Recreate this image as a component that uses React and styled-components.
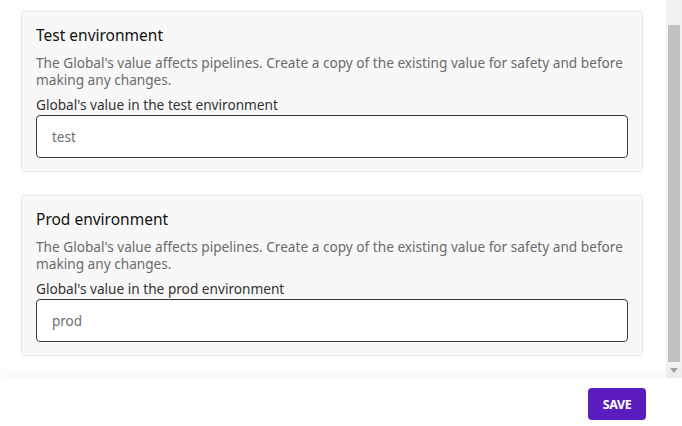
import React, { useEffect, useRef } from "react";
import styled, { createGlobalStyle } from "styled-components";

const GlobalStyle = createGlobalStyle`
  html, body {
    margin: 0;
    padding: 0;
    background: #ffffff;
    font-family: "Noto Sans", "Open Sans", sans-serif;
  }
  * {
    box-sizing: border-box;
  }
`;

const environments = [
  { key: "test", title: "Test environment", value: "test" },
  { key: "prod", title: "Prod environment", value: "prod" },
];

const DESCRIPTION =
  "The Global's value affects pipelines. Create a copy of the existing value for safety and before making any changes.";

export default function App() {
  const scrollRef = useRef(null);

  useEffect(() => {
    if (scrollRef.current) scrollRef.current.scrollTop = 11;
  }, []);

  return (
    <>
      <GlobalStyle />
      <Layout>
        <Body>
          <ScrollArea ref={scrollRef}>
            {environments.map((env) => (
              <EnvCard key={env.key}>
                <CardTitle>{env.title}</CardTitle>
                <Description>{DESCRIPTION}</Description>
                <FieldLabel htmlFor={`global-${env.key}`}>
                  Global's value in the {env.key} environment
                </FieldLabel>
                <ValueInput id={`global-${env.key}`} defaultValue={env.value} />
              </EnvCard>
            ))}
          </ScrollArea>
          <ScrollTrack>
            <ScrollThumb />
            <ScrollArrow>
              <svg width="8" height="5" viewBox="0 0 8 5">
                <path d="M0 0h8L4 5z" fill="#a3a3a3" />
              </svg>
            </ScrollArrow>
          </ScrollTrack>
        </Body>
        <Footer>
          <SaveButton type="button">SAVE</SaveButton>
        </Footer>
      </Layout>
    </>
  );
}

/**
 * Layout
 */
const Layout = styled.div`
  width: 100%;
  height: 426px;
  display: flex;
  flex-direction: column;
`;

const Body = styled.div`
  height: 378px;
  display: flex;
  flex-direction: row;
`;

const ScrollArea = styled.div`
  flex: 1;
  height: 100%;
  overflow-y: auto;
  scrollbar-width: none;
  padding: 22px 23px 22px 21px;
  display: flex;
  flex-direction: column;
  gap: 23px;
  &::-webkit-scrollbar {
    display: none;
  }
`;

// Scrollbar
const ScrollTrack = styled.div`
  width: 16px;
  flex: none;
  background: #f1f1f1;
  display: flex;
  flex-direction: column;
  padding-top: 25px;
`;

const ScrollThumb = styled.div`
  flex: 1;
  margin: 0 2px 0 2px;
  background: #c1c1c1;
`;

const ScrollArrow = styled.div`
  height: 16px;
  display: flex;
  align-items: center;
  justify-content: center;
`;

// Card
const EnvCard = styled.section`
  flex: none;
  background: #f8f8f8;
  border: 1px solid #e7e7e7;
  border-radius: 3px;
  padding: 14px 14px 13px 14px;
  display: flex;
  flex-direction: column;
`;

const CardTitle = styled.h3`
  margin: 0 0 10px;
  font-size: 15.5px;
  line-height: 18px;
  font-weight: 400;
  color: #111111;
`;

const Description = styled.p`
  margin: 0 0 7px;
  font-size: 13.65px;
  line-height: 17px;
  color: #6b6b6b;
`;

const FieldLabel = styled.label`
  font-size: 13.65px;
  line-height: 19px;
  font-weight: 400;
  color: #333333;
  margin-bottom: 1px;
`;

const ValueInput = styled.input`
  height: 43px;
  width: 100%;
  border: 1px solid #3a3a3a;
  border-radius: 4px;
  background: #ffffff;
  padding: 0 15px;
  font-family: "Noto Sans", "Open Sans", sans-serif;
  font-size: 13.5px;
  color: #6e6e6e;
  outline: none;
`;

// Footer
const Footer = styled.footer`
  position: relative;
  z-index: 1;
  flex: 1;
  background: #ffffff;
  box-shadow: 0 -6px 14px rgba(0, 0, 0, 0.035);
  display: flex;
  justify-content: flex-end;
  align-items: flex-start;
  padding: 10px 36px 0 0;
`;

const SaveButton = styled.button`
  height: 32px;
  width: 58px;
  border: none;
  border-radius: 4px;
  background: #5b1cbf;
  color: #ffffff;
  font-family: "Noto Sans", "Open Sans", sans-serif;
  font-size: 12.5px;
  font-weight: 700;
  letter-spacing: -0.4px;
  cursor: pointer;
`;
